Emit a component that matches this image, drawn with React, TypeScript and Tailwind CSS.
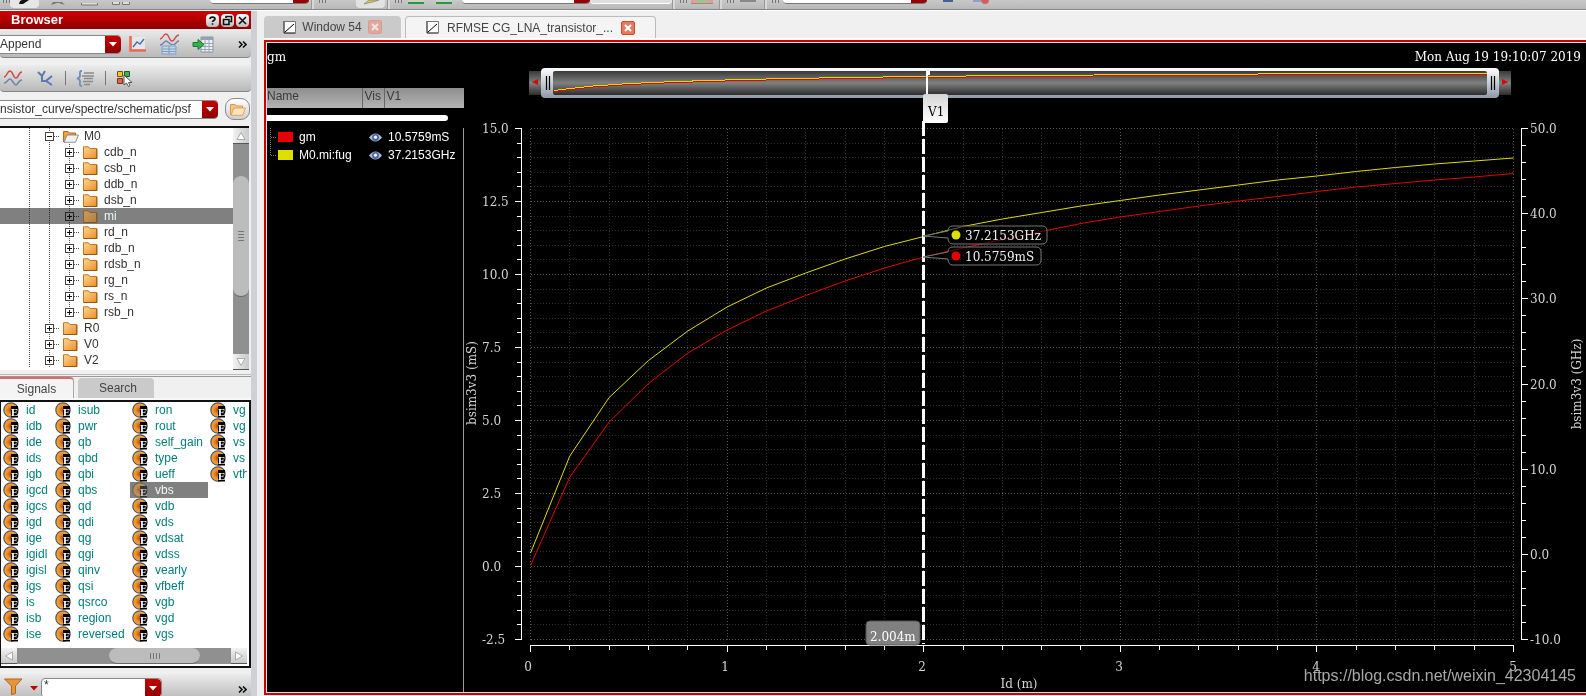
import React from "react";

const SANS = "font-['Liberation_Sans',Arial,sans-serif]";
const SERIF = "font-['DejaVu_Serif','Liberation_Serif',serif]";

/* ---------- shared pieces ---------- */

function ArrowDown() {
  return (
    <svg width="8" height="5" viewBox="0 0 8 5" aria-hidden="true">
      <path d="M0 0H8L4 4.5Z" fill="#fff" />
    </svg>
  );
}

const RED_END =
  "flex w-4 shrink-0 items-center justify-center rounded-r-[4px] bg-linear-to-b from-[#c80000] to-[#8e0000]";

function Grip() {
  return (
    <svg className="shrink-0" width="8" height="9" viewBox="0 0 8 9" aria-hidden="true">
      <path d="M1.5 0V3M4.5 0V3M7.5 0V3" stroke="#777" />
    </svg>
  );
}

function Sep() {
  return <div className="h-full w-[3px] shrink-0 border-l border-[#999] bg-[#d8d8d8]" />;
}

function TopCombo({ label, className }: { label: string; className: string }) {
  return (
    <div className={"flex h-1 shrink-0 overflow-hidden rounded-b-[5px] border-b border-[#777] " + className}>
      <select aria-label={label} className="h-full min-w-0 flex-1 appearance-none bg-white">
        <option></option>
      </select>
      <div className="w-4 bg-[#960000]" />
    </div>
  );
}

function TopBar() {
  return (
    <header className="flex h-[11px] shrink-0 items-start overflow-hidden border-b border-white bg-[#c2c2c2]">
      <div className="flex h-[10px] w-full items-start border-b border-[#858585] bg-linear-to-b from-[#c8c8c8] to-[#b8b8b8]">
        <div className="flex w-[210px] shrink-0 items-start pl-0.5">
          <Grip />
          <button aria-label="Pointer" className="flex h-2 w-[29px] items-start justify-center rounded-b-[4px] bg-[#e6e6e6]">
            <svg width="12" height="5" viewBox="0 0 12 5"><path d="M0 4L1 1L3 0H10L4 4Z" fill="#111" /></svg>
          </button>
          <button aria-label="Favourite" className="ml-3 h-2">
            <svg width="14" height="4" viewBox="0 0 14 4"><path d="M2 0L0 3L6 1H8L14 3L11 0Z" fill="#777" /></svg>
          </button>
          <button aria-label="Single window" className="ml-4 h-2">
            <svg width="17" height="3" viewBox="0 0 17 3"><path d="M.5 0V2H16.500V0" fill="#ddd" stroke="#777" /></svg>
          </button>
          <button aria-label="Grid window" className="ml-3.5 h-2">
            <svg width="18" height="4" viewBox="0 0 18 4"><path d="M.5 0V2.500H7.500V0M10.500 0V2.500H17.500V0" fill="#ddd" stroke="#777" /></svg>
          </button>
        </div>
        <TopCombo label="Workspace" className="w-[99px]" />
        <div className="ml-0.5 flex h-full w-[76px] shrink-0 items-start">
          <Sep />
          <div className="w-1 shrink-0" />
          <Grip />
          <button aria-label="Edit label" className="ml-[30px] flex h-2 w-[29px] items-start justify-center rounded-b-[4px] bg-[#e2e2e2]">
            <svg width="20" height="5" viewBox="0 0 20 5"><path d="M3 4L8 0H18L12 2Z" fill="#d8c060" stroke="#777" strokeWidth=".6" /></svg>
          </button>
        </div>
        <Sep />
        <div className="w-1 shrink-0" />
        <Grip />
        <button aria-label="Graph strip" className="ml-1.5 h-1 w-4 shrink-0 border-b-2 border-[#1f9b3c] bg-[#ccc]" />
        <button aria-label="Graph card" className="ml-3 h-1 w-4 shrink-0 border-b-2 border-[#1f9b3c] bg-[#ccc]" />
        <TopCombo label="Axis" className="ml-2.5 w-[128px]" />
        <div className="h-1 w-[82px] shrink-0 rounded-b-[4px] border-b border-white bg-[#dedede]" />
        <Sep />
        <div className="w-1 shrink-0" />
        <Grip />
        <button aria-label="Histogram" className="ml-1 h-1 w-[22px] shrink-0 border-b border-[#c77] bg-linear-to-r from-[#d99] via-[#8c9] to-[#d99]" />
        <div className="w-1.5 shrink-0" />
        <Sep />
        <div className="w-1 shrink-0" />
        <Grip />
        <button aria-label="Line style" className="ml-1.5 h-0.5 w-4 shrink-0 bg-[#888]" />
        <div className="w-2 shrink-0" />
        <Sep />
        <div className="w-1 shrink-0" />
        <Grip />
        <TopCombo label="Measurement" className="ml-1 w-[144px]" />
        <button aria-label="Save" className="ml-4 h-0.5 w-2.5 shrink-0 bg-[#44609a]" />
        <button aria-label="Remove" className="ml-5 flex shrink-0">
          <span className="h-0.5 w-2 bg-[#8fa0c4]" />
          <span className="h-1 w-2 rounded-b-full bg-[#d26060]" />
        </button>
      </div>
    </header>
  );
}

/* ---------- browser panel ---------- */

function TitleButton({ label, children }: { label: string; children: React.ReactNode }) {
  return (
    <button
      aria-label={label}
      className="flex size-[13px] items-center justify-center rounded-[4px] bg-linear-to-b from-white to-[#bdbdbd]"
    >
      <svg width="11" height="11" viewBox="0 0 11 11" fill="none" stroke="#111" strokeWidth="1.600">
        {children}
      </svg>
    </button>
  );
}

const BAR = "flex shrink-0 items-center rounded-b-[4px] border-b border-[#858585] bg-linear-to-b from-[#ececec] to-[#b9b9b9]";

function OverflowMark() {
  return (
    <button aria-label="More tools" className="ml-auto">
      <svg width="9" height="7" viewBox="0 0 9 7" fill="none" stroke="#111" strokeWidth="1.600">
        <path d="M1 .5L4 3.500L1 6.500M5 .5L8 3.500L5 6.500" />
      </svg>
    </button>
  );
}

function BrowserTools() {
  return (
    <>
      <div className={BAR + " h-[29px] pt-0.5 pr-1"}>
        <div className="flex h-[19px] w-[121px] rounded-r-[4px] border-y border-[#888] bg-white">
          <select aria-label="Plot mode" className="min-w-0 flex-1 appearance-none text-[12px] leading-4 text-[#333]">
            <option>Append</option>
          </select>
          <div className={RED_END}><ArrowDown /></div>
        </div>
        <button aria-label="Plot" className="ml-2">
          <svg width="18" height="18" viewBox="0 0 18 18">
            <path d="M3 2H16V14H3Z" fill="#e4e6ea" />
            <path d="M1.500 1V15.500H17" fill="none" stroke="#ee6a52" strokeWidth="2.600" />
            <path d="M4 12L8 7L11 9L15 4" fill="none" stroke="#4a6fb0" strokeWidth="1.400" />
          </svg>
        </button>
        <button aria-label="Signal table" className="ml-3">
          <svg width="21" height="22" viewBox="0 0 21 22" fill="none">
            <path d="M1 6C4 6 4 1 7 1S10 8 13 8S16 2 20 2" stroke="#c8504a" strokeWidth="1.400" />
            <path d="M1 12C4 12 5 8 7 8S11 12 14 12S17 8 20 8" stroke="#7186ad" strokeWidth="1.400" />
            <path d="M3 12H10V21H3ZM11 12H18V21H11Z" fill="#c2d6ea" />
            <path d="M3 13H17V21H3ZM3 16H17M3 18.500H17M10 13V21" stroke="#7f9dc0" />
          </svg>
        </button>
        <button aria-label="Send to table" className="ml-3">
          <svg width="22" height="17" viewBox="0 0 22 17">
            <path d="M9 1H21V16H9Z" fill="#eceff3" stroke="#8a93a0" />
            <path d="M9 1H21V4H9Z" fill="#93a1b5" />
            <path d="M9 7.500H21M9 10.500H21M9 13.500H21M13 3V16M17 3V16" stroke="#9ba6b4" />
            <path d="M1 6.500H6V3.500L12 8.500L6 13.500V10.500H1Z" fill="#35b04a" stroke="#1c7a30" />
          </svg>
        </button>
        <OverflowMark />
      </div>
      <div className="h-[7px] shrink-0" />
      <div className={BAR + " h-[27px] pl-[3px]"}>
        <button aria-label="Overlay waveforms">
          <svg width="20" height="16" viewBox="0 0 20 16" fill="none">
            <path d="M1 7C4 7 4 1 7 1S10 8 13 8S15 2 19 2" stroke="#c8504a" strokeWidth="1.600" />
            <path d="M1 13C4 13 5 9 7 9S11 15 13 15S15 10 19 10" stroke="#7186ad" strokeWidth="1.600" />
          </svg>
        </button>
        <button aria-label="Branch" className="ml-3.5">
          <svg width="16" height="16" viewBox="0 0 16 16" fill="none" stroke="#5c79b4" strokeWidth="2">
            <path d="M1 2L5 6V12M8 1L5 6M15 6L9 11L15 15M9 11H5" />
          </svg>
        </button>
        <div className="ml-3 h-3.5 w-px bg-[#777]" />
        <button aria-label="Expression list" className="ml-2.5">
          <svg width="19" height="17" viewBox="0 0 19 17" fill="none">
            <path d="M6 1C3 1 4 3 4 5.500S3 8 1 8.500C3 9 4 9 4 11.500S3 16 6 16" stroke="#6e8fbe" strokeWidth="1.800" />
            <path d="M8 3H18M6 6H18M8 8.500H17M7 11.500H17M8 14.500H14" stroke="#8c8c8c" strokeWidth="1.500" />
          </svg>
        </button>
        <div className="ml-2.5 h-3.5 w-px bg-[#777]" />
        <button aria-label="Select families" className="ml-2.5">
          <svg width="17" height="17" viewBox="0 0 17 17">
            <path d="M1.500 1.500H6.500V6.500H1.500Z" fill="#f5c52c" stroke="#6e5410" />
            <path d="M8.500 1.500H13.500V6.500H8.500Z" fill="#3fae4d" stroke="#1f5e28" />
            <path d="M1.500 8.500H6.500V13.500H1.500Z" fill="#d66a4d" stroke="#8a2a14" />
            <path d="M8 5V15L10.500 13L12.500 16.500L14 15.500L12.500 12.500H16Z" fill="#fff" stroke="#333" strokeWidth=".8" />
          </svg>
        </button>
      </div>
      <div className="flex h-[34px] shrink-0 items-center pr-px">
        <div className="flex h-[19px] w-[218px] rounded-r-[4px] border-y border-[#888] bg-white">
          <input
            aria-label="Results directory"
            defaultValue="nsistor_curve/spectre/schematic/psf"
            className="min-w-0 flex-1 text-[12px] leading-4 text-[#333] outline-none"
          />
          <button aria-label="Recent directories" className={RED_END}><ArrowDown /></button>
        </div>
        <button
          aria-label="Open results"
          className="ml-auto flex h-[22px] w-[25px] items-center justify-center rounded-[9px] border border-[#8a8a8a] bg-linear-to-b from-white to-[#cfcfcf]"
        >
          <OpenFolder faded />
        </button>
      </div>
    </>
  );
}

function OpenFolder({ faded = false }: { faded?: boolean }) {
  return (
    <svg width="16" height="13" viewBox="0 0 16 13" aria-hidden="true">
      <path d="M.5 12V1.500H5L6.500 3H12.500V5" fill={faded ? "#f5c68c" : "#f0a040"} stroke={faded ? "#d89a50" : "#b06a1c"} />
      <path d="M1 12.300L4 5H15.500L12.500 12.300Z" fill={faded ? "#fde3c0" : "#f1f1f1"} stroke={faded ? "#d89a50" : "#777"} strokeWidth=".8" />
    </svg>
  );
}

function ClosedFolder({ dim = false }: { dim?: boolean }) {
  return (
    <svg width="15" height="13" viewBox="0 0 15 13" aria-hidden="true">
      <defs>
        <linearGradient id={dim ? "folderDim" : "folderLit"} x1="0" y1="0" x2="1" y2="1">
          <stop offset="0" stopColor={dim ? "#cf9c5c" : "#fbd79a"} />
          <stop offset="1" stopColor={dim ? "#b07f42" : "#ec8f22"} />
        </linearGradient>
      </defs>
      <path
        d="M.5 12.500V.8H5.500L7 2.500H13.800V12.500Z"
        fill={dim ? "url(#folderDim)" : "url(#folderLit)"}
        stroke={dim ? "#8a5f2c" : "#c0761e"}
      />
      <path d="M.5 12.500H13.800V3" fill="none" stroke={dim ? "#80552a" : "#98540e"} />
    </svg>
  );
}

type GuideKind = "line" | "plus" | "minus" | "last";

function Guide({ kind }: { kind: GuideKind }) {
  const box = kind !== "line";
  return (
    <svg className="shrink-0" width="20" height="16" viewBox="0 0 20 16" shapeRendering="crispEdges" aria-hidden="true">
      <path d={kind === "last" ? "M10.500 0V8" : "M10.500 0V16"} stroke="#555" strokeDasharray="1 1" />
      {box && <path d="M15 8.500H20" stroke="#555" strokeDasharray="1 1" />}
      {box && <path d="M6.500 4.500H14.500V12.500H6.500Z" fill="#fff" stroke="#444" />}
      {box && <path d="M8 8.500H13" stroke="#111" />}
      {(kind === "plus" || kind === "last") && <path d="M10.500 6V11" stroke="#111" />}
    </svg>
  );
}

const CHILDREN = ["cdb_n", "csb_n", "ddb_n", "dsb_n", "mi", "rd_n", "rdb_n", "rdsb_n", "rg_n", "rs_n", "rsb_n"];

function TreeRow({ guides, name, open, selected }: { guides: GuideKind[]; name: string; open?: boolean; selected?: boolean }) {
  return (
    <li className={"flex h-4 items-center pl-[19px] " + (selected ? "bg-[#808080] text-[#e8f4f4]" : "text-[#333]")}>
      <div className={"flex " + (selected ? "mix-blend-multiply" : "")}>
        {guides.map((g, i) => (
          <Guide key={i} kind={g} />
        ))}
      </div>
      <div className="flex w-[25px] shrink-0 pl-1">{open ? <OpenFolder /> : <ClosedFolder dim={selected} />}</div>
      <span className="text-[12px] leading-4">{name}</span>
    </li>
  );
}

function Tree() {
  return (
    <div className="mr-0.5 flex h-[244px] shrink-0 border-t-2 border-[#111] bg-white">
      <ul className="min-w-0 flex-1 overflow-hidden">
        <TreeRow guides={["line", "minus"]} name="M0" open />
        {CHILDREN.map((c) => (
          <TreeRow
            key={c}
            guides={["line", "line", c === "rsb_n" ? "last" : "plus"]}
            name={c}
            selected={c === "mi"}
          />
        ))}
        <TreeRow guides={["line", "plus"]} name="R0" />
        <TreeRow guides={["line", "plus"]} name="V0" />
        <TreeRow guides={["line", "plus"]} name="V2" />
      </ul>
      <div className="flex w-4 shrink-0 flex-col bg-[#909090]">
        <button aria-label="Scroll up" className="flex h-4 items-center justify-center border-b border-[#555] bg-linear-to-r from-[#f2f2f2] to-[#c9c9c9]">
          <svg width="10" height="8" viewBox="0 0 10 8"><path d="M1 7.500L5 .5L9 7.500Z" fill="#fff" stroke="#aaa" /></svg>
        </button>
        <div className="h-8 shrink-0" />
        <div className="flex h-[121px] items-center justify-center rounded-full border-b border-[#666] bg-[#bcbcbc]">
          <svg width="6" height="10" viewBox="0 0 6 10"><path d="M0 .5H6M0 3.500H6M0 6.500H6M0 9.500H6" stroke="#777" /></svg>
        </div>
        <button aria-label="Scroll down" className="mt-auto flex h-4 items-center justify-center border-b border-[#555] bg-linear-to-r from-[#f2f2f2] to-[#c9c9c9]">
          <svg width="10" height="8" viewBox="0 0 10 8"><path d="M1 .5L5 7.500L9 .5Z" fill="#fff" stroke="#aaa" /></svg>
        </button>
      </div>
    </div>
  );
}

const SIGNALS: string[][] = [
  ["id", "idb", "ide", "ids", "igb", "igcd", "igcs", "igd", "ige", "igidl", "igisl", "igs", "is", "isb", "ise"],
  ["isub", "pwr", "qb", "qbd", "qbi", "qbs", "qd", "qdi", "qg", "qgi", "qinv", "qsi", "qsrco", "region", "reversed"],
  ["ron", "rout", "self_gain", "type", "ueff", "vbs", "vdb", "vds", "vdsat", "vdss", "vearly", "vfbeff", "vgb", "vgd", "vgs"],
  ["vg", "vg", "vs", "vs", "vth"],
];

function SignalIcon({ dim }: { dim: boolean }) {
  return (
    <svg className={"shrink-0 " + (dim ? "opacity-60" : "")} width="16" height="16" viewBox="0 0 16 16" aria-hidden="true">
      <defs>
        <radialGradient id="signalBall">
          <stop offset="0" stopColor="#b83a0c" />
          <stop offset=".5" stopColor="#e58a28" />
          <stop offset="1" stopColor="#f3ac48" />
        </radialGradient>
      </defs>
      <circle cx="8" cy="8" r="7.200" fill="url(#signalBall)" stroke="#555" strokeWidth="1.200" />
      <path d="M8 4H15V15.500H8Z" fill="#000" />
      <text x="8" y="14" fontSize="11" fontWeight="700" fill="#fff" fontFamily="Liberation Serif, serif">E</text>
    </svg>
  );
}

function Signals() {
  const tracks = ["w-[52px]", "w-[77px]", "w-[78px]", "w-[60px]"];
  return (
    <div className="shrink-0 border-2 border-l border-[#111] bg-white">
      <div className="mr-0.5 flex h-[246px] overflow-hidden">
        {SIGNALS.map((col, i) => (
          <ul key={i} className={"shrink-0 " + tracks[i]}>
            {col.map((s, j) => (
              <li
                key={j}
                className={"flex h-4 items-center gap-[7px] pl-0.5 " + (s === "vbs" ? "bg-[#808080] text-[#eef6f6]" : "text-[#00807c]")}
              >
                <SignalIcon dim={s === "vbs"} />
                <span className="text-[12px] leading-4">{s}</span>
              </li>
            ))}
          </ul>
        ))}
      </div>
      <div className="mr-0.5 flex h-4 bg-[#909090]">
        <button aria-label="Scroll left" className="flex w-4 items-center justify-center border-b border-[#555] bg-linear-to-b from-[#f2f2f2] to-[#c9c9c9]">
          <svg width="8" height="10" viewBox="0 0 8 10"><path d="M7.500 1L.5 5L7.500 9Z" fill="#fff" stroke="#aaa" /></svg>
        </button>
        <div className="w-[92px] shrink-0" />
        <div className="flex w-[91px] shrink-0 items-center justify-center rounded-full border-b border-[#666] bg-[#bcbcbc]">
          <svg width="10" height="6" viewBox="0 0 10 6"><path d="M.5 0V6M3.500 0V6M6.500 0V6M9.500 0V6" stroke="#777" /></svg>
        </div>
        <button aria-label="Scroll right" className="ml-auto flex w-4 items-center justify-center border-b border-[#555] bg-linear-to-b from-[#f2f2f2] to-[#c9c9c9]">
          <svg width="8" height="10" viewBox="0 0 8 10"><path d="M.5 1L7.500 5L.5 9Z" fill="#fff" stroke="#aaa" /></svg>
        </button>
      </div>
      <div className="h-0.5" />
    </div>
  );
}

function Browser() {
  return (
    <aside className={"flex w-[251px] shrink-0 flex-col overflow-hidden bg-[#f0f0f0] " + SANS}>
      <div className="flex h-[18px] shrink-0 items-center gap-0.5 bg-linear-to-b from-[#d40000] to-[#8c0000] pl-[11px] pr-0.5">
        <h2 className="flex-1 text-[13px] leading-4 font-bold text-white">Browser</h2>
        <TitleButton label="Help"><path d="M3 4C3 1.500 8 1.500 8 4C8 5.500 5.500 5.500 5.500 7M5.500 8.200V9.800" /></TitleButton>
        <TitleButton label="Float"><path d="M4 3V1.500H9.500V6.500H8M1.500 4.500H7V9.500H1.500Z" /></TitleButton>
        <TitleButton label="Close"><path d="M2 2L9 9M9 2L2 9" /></TitleButton>
      </div>
      <BrowserTools />
      <Tree />
      <div className="h-[7px] shrink-0 border-b border-[#999] pt-1">
        <div className="h-px bg-[#bbb]" />
      </div>
      <div role="tablist" className="flex h-[21px] shrink-0 items-stretch gap-1 text-[12px] text-[#444]">
        <button role="tab" aria-selected="true" className="w-[74px] rounded-tr-[4px] border-t-2 border-r border-t-[#e06a6a] border-r-[#aaa] bg-[#f4f4f4]">
          Signals
        </button>
        <button role="tab" aria-selected="false" className="mt-px w-[76px] rounded-t-[4px] bg-[#cacaca] pl-1">
          Search
        </button>
      </div>
      <div className="h-0.5 shrink-0 bg-[#f8f8f8]" />
      <Signals />
      <div className="h-1.5 shrink-0" />
      <div className="flex h-[22px] shrink-0 items-start overflow-hidden bg-linear-to-b from-[#ececec] to-[#c0c0c0] pt-1 pr-1 pl-1">
        <button aria-label="Filter">
          <svg width="19" height="17" viewBox="0 0 19 17">
            <path d="M.5 1H18L11.500 8V15.500L7.500 16.500V8Z" fill="#e8943a" stroke="#b0651c" />
          </svg>
        </button>
        <button aria-label="Filter options" className="mt-2 ml-[7px]">
          <svg width="8" height="5" viewBox="0 0 8 5"><path d="M0 0H8L4 4.500Z" fill="#c00000" /></svg>
        </button>
        <div className="ml-[3px] flex h-5 w-[121px] overflow-hidden rounded-[4px] border border-[#888] bg-white">
          <input aria-label="Signal filter" defaultValue="*" className="h-3 min-w-0 flex-1 pl-0.5 text-[12px] leading-3 text-[#333] outline-none" />
          <button aria-label="Filter history" className={RED_END}><ArrowDown /></button>
        </div>
        <div className="mt-2 ml-auto flex"><OverflowMark /></div>
      </div>
    </aside>
  );
}

/* ---------- chart ---------- */

const X0 = 530.5;
const X_UNIT = 196.6;
const Y_TOP = 128.5;
const Y_BOTTOM = 639.5;
const FUG = [553, 456, 397.5, 360.5, 331, 307, 288, 273, 259, 246.5, 236.5, 226.5, 219, 212.5, 206, 200.5, 195, 190, 185, 180, 176, 171.5, 167.5, 164, 161, 158];
const GM = [565.5, 477, 422, 383.5, 353, 330, 311, 295.5, 281, 268, 257, 248, 239.5, 231.5, 223.5, 217, 211.5, 206, 201, 196.5, 191.5, 187, 183.5, 180, 177, 173.5];

const trace = (ys: number[]) => ys.map((y, i) => `${X0 + (i * X_UNIT) / 5},${y}`).join(" ");
const overview = (ys: number[], shift: number) =>
  ys.map((y, i) => `${554 + (i * 933) / 25},${shift + 73 + ((y - 158) / 408) * 18}`).join(" ");

function Callout({ y, width, color, text }: { y: number; width: number; color: string; text: string }) {
  const r = 948 + width;
  return (
    <g>
      <path
        d={`M923 ${y}L948 ${y - 5}Q948 ${y - 10} 953 ${y - 10}H${r - 5}Q${r} ${y - 10} ${r} ${y - 5}V${y + 3}Q${r} ${y + 8} ${r - 5} ${y + 8}H953Q948 ${y + 8} 948 ${y + 2}Z`}
        fill="#000"
        fillOpacity=".55"
        stroke="#777"
      />
      <circle cx="956" cy={y - 1} r="4.500" fill={color} />
      <text x="965" y={y + 4} fill="#eee">{text}</text>
    </g>
  );
}

function Chart() {
  const xs = Array.from({ length: 26 }, (_, i) => i);
  const ys = Array.from({ length: 36 }, (_, i) => i);
  const rs = Array.from({ length: 31 }, (_, i) => i);
  const px = (i: number) => Math.round((i * X_UNIT) / 5) + X0;
  const py = (i: number) => Math.round((i * 511) / 35) + Y_TOP;
  const pr = (i: number) => Math.round((i * 511) / 30) + Y_TOP;
  return (
    <svg
      viewBox="464 68 1122 624"
      className={"block h-auto min-w-0 flex-1 self-start text-[12px] " + SERIF}
      role="img"
      aria-label="gm and fug against Id"
      fill="#d4d4d4"
    >
      <defs>
        <linearGradient id="track" x1="0" y1="0" x2="0" y2="1">
          <stop offset="0" stopColor="#3a3a3a" />
          <stop offset=".5" stopColor="#808080" />
          <stop offset="1" stopColor="#2c2c2c" />
        </linearGradient>
        <linearGradient id="frame" x1="0" y1="0" x2="0" y2="1">
          <stop offset="0" stopColor="#ffffff" />
          <stop offset="1" stopColor="#8e9aa8" />
        </linearGradient>
        <linearGradient id="flag" x1="0" y1="0" x2="0" y2="1">
          <stop offset="0" stopColor="#d6d6d6" />
          <stop offset="1" stopColor="#ffffff" />
        </linearGradient>
      </defs>

      {/* overview strip */}
      <rect x="529" y="71" width="14" height="24" fill="url(#track)" />
      <rect x="1497" y="71" width="14" height="24" fill="url(#track)" />
      <path d="M538 79V85L532 82Z M1502 79V85L1508 82Z" fill="#e00000" />
      <rect x="541" y="68" width="958" height="30" rx="4" fill="url(#frame)" />
      <rect x="553" y="71" width="934" height="24" rx="2" fill="url(#track)" />
      <path d="M546.500 76V90M549.500 76V90M1491.500 76V90M1494.500 76V90" stroke="#000" strokeWidth="1.200" />
      <g fill="none" shapeRendering="crispEdges">
        <polyline points={overview(FUG, 1)} stroke="#e60000" />
        <polyline points={overview(FUG, 0)} stroke="#dede00" />
      </g>
      <path d="M926 71H930V75H928V95H926Z" fill="#fff" />

      {/* grid */}
      <g strokeDasharray="1 2" fill="none" shapeRendering="crispEdges">
        {xs.map((i) => (
          <path key={i} d={`M${px(i)} ${Y_TOP}V${Y_BOTTOM}`} stroke={i % 5 ? "#303030" : "#585858"} />
        ))}
        {ys.map((i) => (
          <path key={i} d={`M${X0} ${py(i)}H${px(25)}`} stroke={i % 5 ? "#303030" : "#585858"} />
        ))}
      </g>

      {/* axes */}
      <g stroke="#fff" fill="none" shapeRendering="crispEdges">
        <path d={`M521.500 ${Y_TOP}V${Y_BOTTOM}M1521.500 ${Y_TOP}V${Y_BOTTOM}M${X0} 645.500H${px(25)}`} />
        {ys.map((i) => (
          <path key={i} d={`M${i % 5 ? 517 : 515} ${py(i)}H522`} />
        ))}
        {rs.map((i) => (
          <path key={i} d={`M1521 ${pr(i)}H${i % 5 ? 1526 : 1528}`} />
        ))}
        {xs.map((i) => (
          <path key={i} d={`M${px(i)} 645V${i % 5 ? 650 : 652}`} />
        ))}
      </g>

      {/* tick labels */}
      {["15.0", "12.5", "10.0", "7.5", "5.0", "2.5", "0.0", "-2.5"].map((t, i) => (
        <text key={t} x="482" y={133 + i * 73}>{t}</text>
      ))}
      {["50.0", "40.0", "30.0", "20.0", "10.0", "0.0", "-10.0"].map((t, i) => (
        <text key={t} x="1530" y={133 + Math.round(i * 85.17)}>{t}</text>
      ))}
      <g textAnchor="middle">
        {["0", "1", "2", "3", "4", "5"].map((t, i) => (
          <text key={t} x={528 + i * 197} y="671">{t}</text>
        ))}
        <text x="1019" y="688">Id (m)</text>
        <text transform="translate(476 383) rotate(-90)">bsim3v3 (mS)</text>
        <text transform="translate(1581 384) rotate(-90)">bsim3v3 (GHz)</text>
      </g>

      {/* traces */}
      <g fill="none">
        <polyline points={trace(FUG)} stroke="#dede00" />
        <polyline points={trace(GM)} stroke="#e60000" />
      </g>

      {/* marker */}
      <path d="M923.500 121V644" stroke="#fff" strokeWidth="3" strokeDasharray="15 3" />
      <rect x="923" y="94" width="25" height="29" rx="2" fill="url(#flag)" />
      <text x="928" y="116" fill="#000">V1</text>
      <rect x="866" y="621" width="54" height="24" rx="4" fill="#808080" stroke="#555" />
      <text x="870" y="641" fill="#fff">2.004m</text>
      <Callout y={236} width={99} color="#dede00" text="37.2153GHz" />
      <Callout y={257} width={93} color="#e60000" text="10.5759mS" />
    </svg>
  );
}

/* ---------- legend ---------- */

function Eye() {
  return (
    <svg width="13" height="9" viewBox="0 0 13 9" aria-hidden="true">
      <path d="M0 4.500Q6.500-3.500 13 4.500Q6.500 12.500 0 4.500Z" fill="#a9bbdc" />
      <circle cx="6.500" cy="4.500" r="3.400" fill="#4a6496" />
      <circle cx="6.500" cy="4.200" r="1.600" fill="#f4f7ff" />
    </svg>
  );
}

const TRACES = [
  { name: "gm", value: "10.5759mS", swatch: "bg-[#e60000]", tail: "M3.500 0V18" },
  { name: "M0.mi:fug", value: "37.2153GHz", swatch: "bg-[#dede00]", tail: "M3.500 0V9" },
];

function Legend() {
  const th = "h-5 truncate bg-linear-to-b from-[#8e8e8e] to-[#b4b4b4] p-0 text-left align-top leading-4 font-normal text-[#3a3a3a]";
  return (
    <div className={"flex w-[197px] shrink-0 flex-col pt-5 text-[12px] " + SANS}>
      <table className="w-full table-fixed border-collapse">
        <thead>
          <tr>
            <th className={th + " w-[95px]"}>Name</th>
            <th className={th + " w-[22px] border-l border-[#666] pl-0.5"}>Vis</th>
            <th className={th + " border-l border-[#666] pl-0.5"}>V1</th>
          </tr>
        </thead>
        <tbody>
          <tr>
            <td colSpan={3} className="h-5 p-0">
              <div className="h-1.5 w-[181px] rounded-r-full bg-white" />
            </td>
          </tr>
          {TRACES.map((t) => (
            <tr key={t.name} className="h-[18px] border-r border-[#999] text-white">
              <td className="p-0">
                <div className="flex h-[18px] items-center">
                  <svg className="shrink-0" width="11" height="18" viewBox="0 0 11 18" shapeRendering="crispEdges">
                    <path d={t.tail + "M4 9.500H10"} stroke="#777" strokeDasharray="1 1" fill="none" />
                  </svg>
                  <span className={"mr-1.5 h-2.5 w-[15px] shrink-0 " + t.swatch} />
                  {t.name}
                </div>
              </td>
              <td className="p-0"><div className="flex justify-center pl-1"><Eye /></div></td>
              <td className="p-0 pl-1 leading-4">{t.value}</td>
            </tr>
          ))}
        </tbody>
      </table>
      <div className="flex-1 border-r border-[#999]" />
    </div>
  );
}

/* ---------- window ---------- */

function TabIcon() {
  return (
    <svg width="13" height="13" viewBox="0 0 13 13" aria-hidden="true">
      <path d="M.5 .5H12V12H.5Z" fill="#fff" />
      <path d="M1 0V12H12.500M2 11L11 3" fill="none" stroke="#000" />
      <path d="M1 .5H12.500V12" fill="none" stroke="#777" />
    </svg>
  );
}

function TabClose({ label, faded }: { label: string; faded?: boolean }) {
  return (
    <span
      aria-label={label}
      className={
        "flex size-[14px] items-center justify-center rounded-[2px] border " +
        (faded ? "border-[#dc9c90] bg-[#e0a89c]" : "border-[#cf4a32] bg-[#e27a5c]")
      }
    >
      <svg width="8" height="8" viewBox="0 0 8 8">
        <path d="M1 1L7 7M7 1L1 7" stroke={faded ? "#f4e4e0" : "#fff"} strokeWidth="2" />
      </svg>
    </span>
  );
}

export default function App() {
  return (
    <div className="flex min-h-screen flex-col overflow-hidden bg-[#f0f0f0]">
      <TopBar />
      <div className="flex flex-1">
        <Browser />
        <div className="w-1.5 shrink-0 bg-[#cfd0d6]" />
        <main className="flex min-w-0 flex-1 flex-col pb-px pl-[7px]">
          <div role="tablist" className={"flex h-[27px] shrink-0 items-end gap-1 text-[12px] text-[#444] " + SANS}>
            <button role="tab" aria-selected="false" className="flex h-[22px] w-[137px] items-center justify-center gap-[6px] rounded-t-[4px] bg-[#cacaca]">
              <TabIcon />
              Window 54
              <TabClose label="Close Window 54" faded />
            </button>
            <button role="tab" aria-selected="true" className="flex h-[22px] w-[251px] items-center justify-center gap-2 rounded-t-[4px] border border-b-0 border-[#bbb] bg-[#f4f4f4]">
              <TabIcon />
              RFMSE CG_LNA_transistor_...
              <TabClose label="Close RFMSE CG_LNA_transistor" />
            </button>
          </div>
          <div className="h-0.5 shrink-0 bg-white" />
          <div className="flex flex-1 flex-col border-y-2 border-l-2 border-[#cc0000] bg-black">
            <div className="flex flex-1 flex-col border-y border-l border-[#f3dcdc]">
              <div className={"flex h-[25px] shrink-0 items-center justify-between pt-0.5 pr-[5px] text-[12px] text-white " + SERIF}>
                <h1>gm</h1>
                <time>Mon Aug 19 19:10:07 2019</time>
              </div>
              <div className="relative flex flex-1 items-stretch">
                <Legend />
                <Chart />
                <a
                  href="https://blog.csdn.net/weixin_42304145"
                  className={"absolute right-[10px] bottom-1 text-[16px] leading-6 text-[#a8a8a8] " + SANS}
                >
                  https://blog.csdn.net/weixin_42304145
                </a>
              </div>
            </div>
          </div>
        </main>
      </div>
    </div>
  );
}
